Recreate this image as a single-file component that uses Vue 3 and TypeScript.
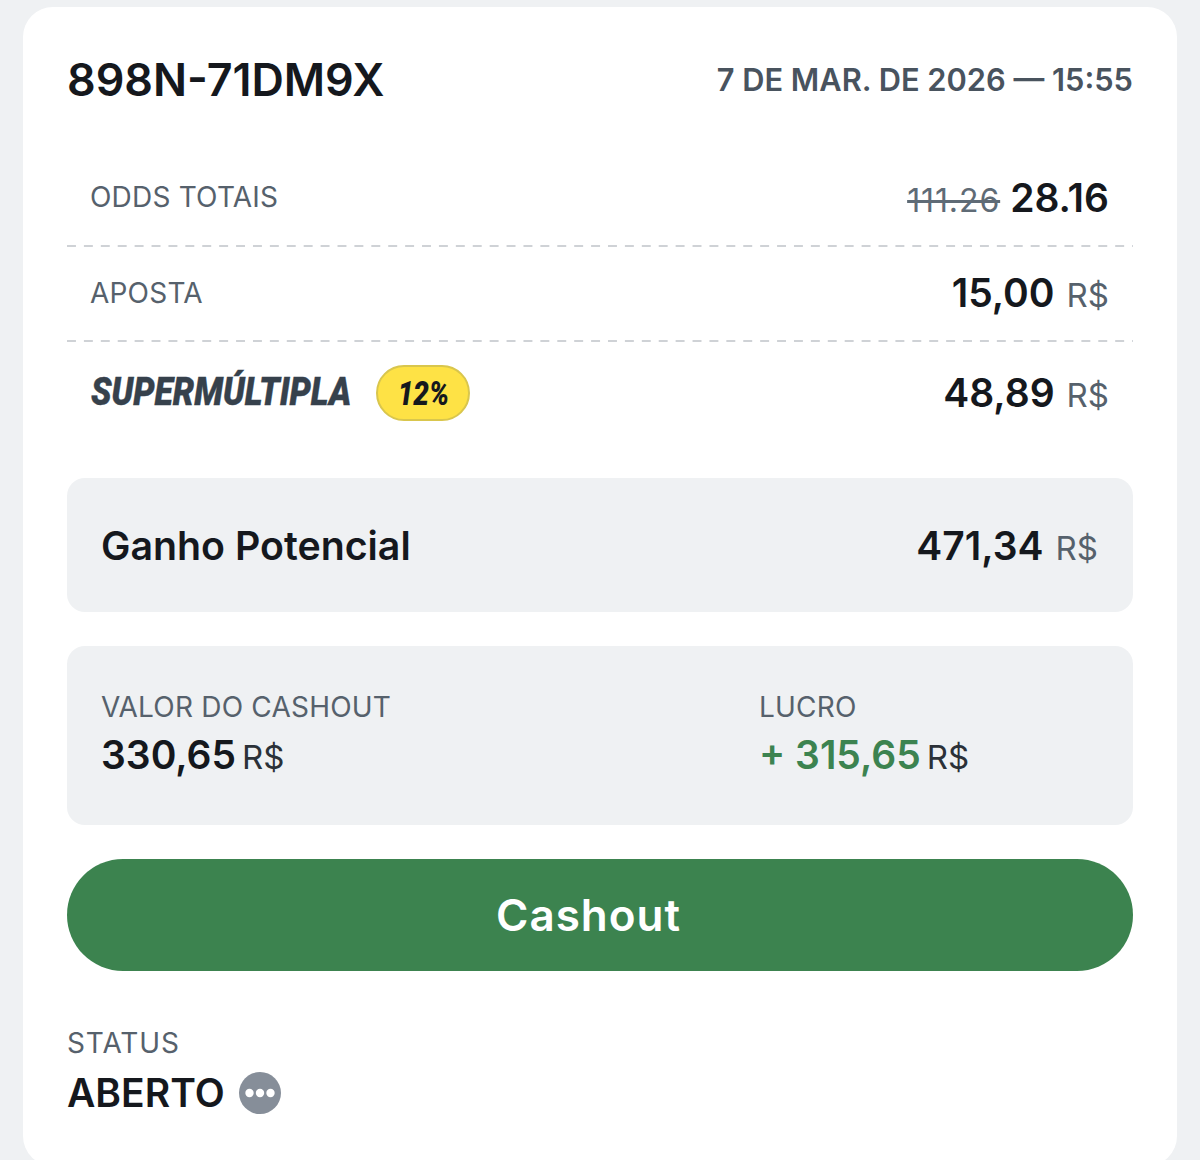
<script setup lang="ts">
const rows = { odds: '28.16', old: '111.26' }
</script>

<template>
  <div class="page">
    <main class="card">
      <header class="head">
        <h1 class="code">898N-71DM9X</h1>
        <span class="date">7 DE MAR. DE 2026 — 15:55</span>
      </header>

      <section class="rows">
        <div class="row dashed r1">
          <span class="label">ODDS TOTAIS</span>
          <span class="value"><s class="old">{{ rows.old }}</s> <b class="num odds">{{ rows.odds }}</b></span>
        </div>
        <div class="row dashed r2">
          <span class="label">APOSTA</span>
          <span class="value"><b class="num">15,00</b><span class="cur">R$</span></span>
        </div>
        <div class="row r3">
          <span class="promo">
            <span class="super">SUPERMÚLTIPLA</span>
            <span class="pill"><span class="pill-text">12%</span></span>
          </span>
          <span class="value lifted"><b class="num">48,89</b><span class="cur">R$</span></span>
        </div>
      </section>

      <section class="box potential">
        <span class="pot-label">Ganho Potencial</span>
        <span class="value"><b class="num">471,34</b><span class="cur">R$</span></span>
      </section>

      <section class="box cash">
        <div class="cash-col first">
          <span class="label">VALOR DO CASHOUT</span>
          <span class="cash-val"><b class="num">330,65</b><span class="cur tight">R$</span></span>
        </div>
        <div class="cash-col">
          <span class="label">LUCRO</span>
          <span class="cash-val"><b class="num green">+ 315,65</b><span class="cur tight">R$</span></span>
        </div>
      </section>

      <button class="cta" type="button">Cashout</button>

      <footer class="status">
        <span class="label wide">STATUS</span>
        <span class="st-line">
          <b class="st-val">ABERTO</b>
          <svg class="dots" width="42" height="42" viewBox="0 0 42 42" aria-hidden="true">
            <circle cx="21" cy="21" r="21" fill="#868e99" />
            <circle cx="10.5" cy="21" r="4.2" fill="#fff" />
            <circle cx="21" cy="21" r="4.2" fill="#fff" />
            <circle cx="31.5" cy="21" r="4.2" fill="#fff" />
          </svg>
        </span>
      </footer>
    </main>
  </div>
</template>

<style>
html, body { margin: 0; background: #eff1f3; }
</style>

<style scoped>
.page {
  height: 1160px;
  overflow: hidden;
  padding: 7px 23px 0;
  box-sizing: border-box;
  background: #eff1f3;
  font-family: Inter, "Noto Sans", sans-serif;
  color: #15181d;
}
.card {
  background: #fff;
  border-radius: 30px;
  height: 1159px;
  padding: 45px 44px 0;
  box-sizing: border-box;
}
.head {
  display: flex;
  justify-content: space-between;
  align-items: center;
  height: 56px;
}
.code {
  margin: 0;
  font-size: 44.8px;
  font-weight: 600;
  line-height: 56px;
}
.date {
  font-size: 30.8px;
  font-weight: 600;
  color: #49535e;
  margin-bottom: 2px;
}
.rows { margin-top: 43px; }
.row {
  display: flex;
  justify-content: space-between;
  align-items: center;
  box-sizing: border-box;
  padding: 0 24px 4px 23px;
}
.r1 { height: 96px; }
.r2 { height: 95px; }
.r3 { height: 104px; padding-bottom: 2px; }
.dashed {
  background-image: linear-gradient(to right, #cfd2d6 0 9px, transparent 9px 17px);
  background-size: 17px 2px;
  background-repeat: round no-repeat;
  background-position: 0 100%;
}
.label {
  font-size: 28px;
  color: #56616c;
  line-height: 34px;
  letter-spacing: 0.2px;
}
.label.wide { letter-spacing: 0.9px; }
.value {
  display: inline-flex;
  align-items: baseline;
}
.value.lifted { margin-bottom: 2px; }
.num {
  font-size: 39px;
  font-weight: 600;
}
.odds { margin-left: 12px; }
.old {
  font-size: 32px;
  letter-spacing: 0.9px;
  color: #5f6b76;
  margin-right: -2px;
}
.cur {
  font-size: 33px;
  color: #56616c;
  margin-left: 12px;
}
.cur.tight {
  margin-left: 6px;
  color: #2b3138;
}
.promo {
  display: flex;
  align-items: center;
  gap: 24px;
}
.super {
  font-family: Roboto, sans-serif;
  font-size: 39px;
  font-weight: 900;
  font-style: italic;
  color: #36414c;
  -webkit-text-stroke: 0.4px #36414c;
  transform: translate(1px, -1px) scaleX(0.865);
  transform-origin: left center;
  width: 262px;
  white-space: nowrap;
}
.pill {
  box-sizing: border-box;
  width: 94px;
  height: 56px;
  border-radius: 28px;
  background: #fee245;
  border: 2px solid #d9c64d;
  display: flex;
  align-items: center;
  justify-content: center;
  color: #15181d;
}
.pill-text {
  display: inline-block;
  font-family: Roboto, sans-serif;
  font-weight: 900;
  font-style: italic;
  font-size: 34px;
  transform: scaleX(0.82);
}
.box {
  background: #eff1f3;
  border-radius: 18px;
  padding: 0 35px 0 34px;
  box-sizing: border-box;
}
.potential {
  margin-top: 32px;
  height: 134px;
  display: flex;
  justify-content: space-between;
  align-items: center;
}
.pot-label {
  font-size: 39.3px;
  font-weight: 600;
}
.cash {
  margin-top: 34px;
  height: 179px;
  display: flex;
  padding-top: 44px;
}
.cash-col {
  display: flex;
  flex-direction: column;
}
.cash-col.first { width: 658px; }
.cash-val {
  display: inline-flex;
  align-items: baseline;
  margin-top: 7px;
}
.green { color: #3c8350; }
.cta {
  display: block;
  width: 100%;
  height: 112px;
  margin-top: 34px;
  border: 0;
  border-radius: 56px;
  background: #3c834f;
  color: #fff;
  font-family: inherit;
  font-size: 44px;
  font-weight: 600;
  letter-spacing: 1px;
  padding: 0 23px 0 0;
}
.status {
  margin-top: 55px;
  display: flex;
  flex-direction: column;
}
.st-line {
  display: flex;
  align-items: center;
  gap: 14px;
  margin-top: 9px;
}
.st-val {
  font-size: 39px;
  font-weight: 600;
}
</style>
